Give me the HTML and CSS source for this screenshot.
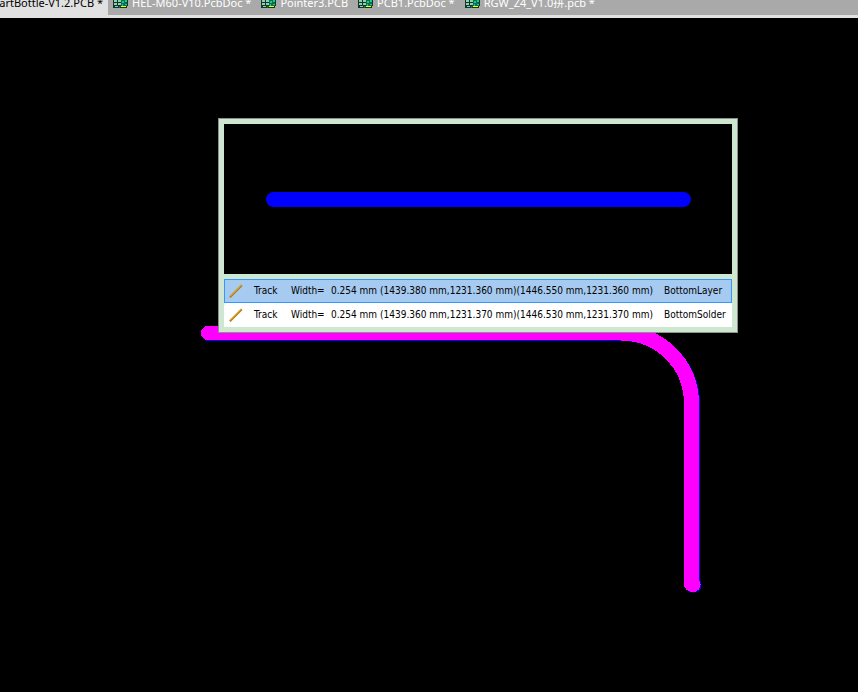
FILE: index.html
```html
<!DOCTYPE html>
<html lang="en">
<head>
<meta charset="utf-8">
<title>PCB editor</title>
<link rel="stylesheet" href="styles.css">
</head>
<body>
<svg class="defs" aria-hidden="true">
  <symbol id="pcb" viewBox="0 0 16 10">
    <path d="M0 0H14V8H0Z" fill="#12382c"/>
    <path d="M1 0H4V2H1ZM5 0H8V2H5ZM1 3H4V5H1ZM5 3H8V5H5ZM2 6H5V7H2Z" fill="#8fd0b0"/>
    <path d="M8 0H15V6H13V8H6V6H8Z" fill="#087050"/>
    <path d="M9 1H11V3H9ZM12 0H14V2H12ZM12 4H14V5H12ZM9 4H10V6H9Z" fill="#20c888"/>
    <path d="M14 0H15V6H14Z" fill="#12382c"/>
    <path d="M8 6H13V7H8Z" fill="#ffff00"/>
    <path d="M7 7H13V8H7Z" fill="#103018"/>
  </symbol>
  <symbol id="track" viewBox="0 0 14 14">
    <path d="M.8 13.2L12.8 1.2" stroke="#a87418" stroke-width="2"/>
    <path d="M.8 12.7L12.3 1.2" stroke="#ffc21c" stroke-width="1"/>
  </symbol>
</svg>
<nav class="tabs" aria-label="Open documents">
  <a class="tab active" href="#"><span>SmartBottle-V1.2.PCB *</span></a>
  <a class="tab" href="#"><svg class="doc"><use href="#pcb"/></svg>HEL-M60-V10.PcbDoc *</a>
  <a class="tab" href="#"><svg class="doc"><use href="#pcb"/></svg>Pointer3.PCB</a>
  <a class="tab" href="#"><svg class="doc"><use href="#pcb"/></svg>PCB1.PcbDoc *</a>
  <a class="tab" href="#"><svg class="doc"><use href="#pcb"/></svg>RGW_Z4_V1.0拼.pcb *</a>
</nav>
<main class="board">
  <svg class="copper" width="858" height="674" aria-hidden="true" shape-rendering="crispEdges">
    <g fill="none" stroke-width="15" stroke-linecap="round">
      <path d="M209 315.5H621A71 71 0 0 1 692.5 386V566M693 567H694" stroke="#0000ff"/>
      <path d="M621 315A70.500 70.500 0 0 1 691.5 385V566M693 566.500H693.2" stroke="#ff00ff"/>
      <path d="M208 315H621" stroke="#ff00ff" stroke-width="14"/>
    </g>
  </svg>
  <section class="picker" aria-label="Select object">
    <div class="preview">
      <div class="segment"></div>
    </div>
    <table class="objects">
      <colgroup><col class="c-icon"><col class="c-kind"><col class="c-label"><col class="c-size"><col class="c-place"><col></colgroup>
      <tr class="selected">
        <td><svg class="line"><use href="#track"/></svg></td><td>Track</td><td>Width=</td><td>0.254 mm</td><td>(1439.380 mm,1231.360 mm)(1446.550 mm,1231.360 mm)</td><td>BottomLayer</td>
      </tr>
      <tr>
        <td><svg class="line"><use href="#track"/></svg></td><td>Track</td><td>Width=</td><td>0.254 mm</td><td>(1439.360 mm,1231.370 mm)(1446.530 mm,1231.370 mm)</td><td>BottomSolder</td>
      </tr>
    </table>
  </section>
</main>
</body>
</html>
```
FILE: styles.css
```css
* { box-sizing: border-box; }

body {
  margin: 0;
  min-height: 100vh;
  display: flex;
  flex-direction: column;
  overflow: hidden;
  background: #000;
  font-family: "DejaVu Sans Condensed", Roboto, sans-serif;
}

.defs { position: absolute; width: 0; height: 0; }

.tabs {
  display: flex;
  height: 18px;
  background: #a9a9a9;
  border-bottom: 3px solid #e1e1e1;
  font: 11px/14px "Noto Sans", "Noto Sans CJK SC", sans-serif;
}

.tab {
  display: flex;
  align-items: flex-start;
  gap: 3px;
  height: 15px;
  margin-top: -4px;
  padding: 0 5px;
  color: #fff;
  text-decoration: none;
  white-space: nowrap;
}

.tab.active {
  width: 108px;
  height: 19px;
  justify-content: flex-end;
  background: #e1e1e1;
  color: #000;
}

.doc { width: 16px; height: 10px; margin-top: 4px; }

.board { position: relative; flex: 1; overflow: hidden; }

.copper { display: block; }

.picker {
  position: absolute;
  left: 218px;
  top: 100px;
  width: 520px;
  padding: 5px;
  border: 1px solid #8f8f8f;
  background: #cde7d0;
}

.preview {
  display: flex;
  height: 150px;
  padding: 0 41px 0 42px;
  align-items: center;
  background: #000;
}

.segment {
  flex: 1;
  height: 15px;
  border-radius: 8px;
  background: #00f;
}

.objects {
  width: 100%;
  margin-top: 5px;
  table-layout: fixed;
  border-collapse: collapse;
  background: #fff;
  color: #000;
  font-size: 10px;
  line-height: 16px;
}

.objects tr { height: 24px; }
.objects td { padding: 0; white-space: nowrap; }
.objects td:first-child { padding-left: 5px; }
.objects .selected {
  background: #a6caf0;
  outline: 1px solid #3399ff;
  outline-offset: -1px;
}

.c-icon { width: 30px; }
.c-kind { width: 37px; }
.c-label { width: 40px; }
.c-size { width: 49px; }
.c-place { width: 284px; }

.line { display: block; width: 14px; height: 14px; }
```
